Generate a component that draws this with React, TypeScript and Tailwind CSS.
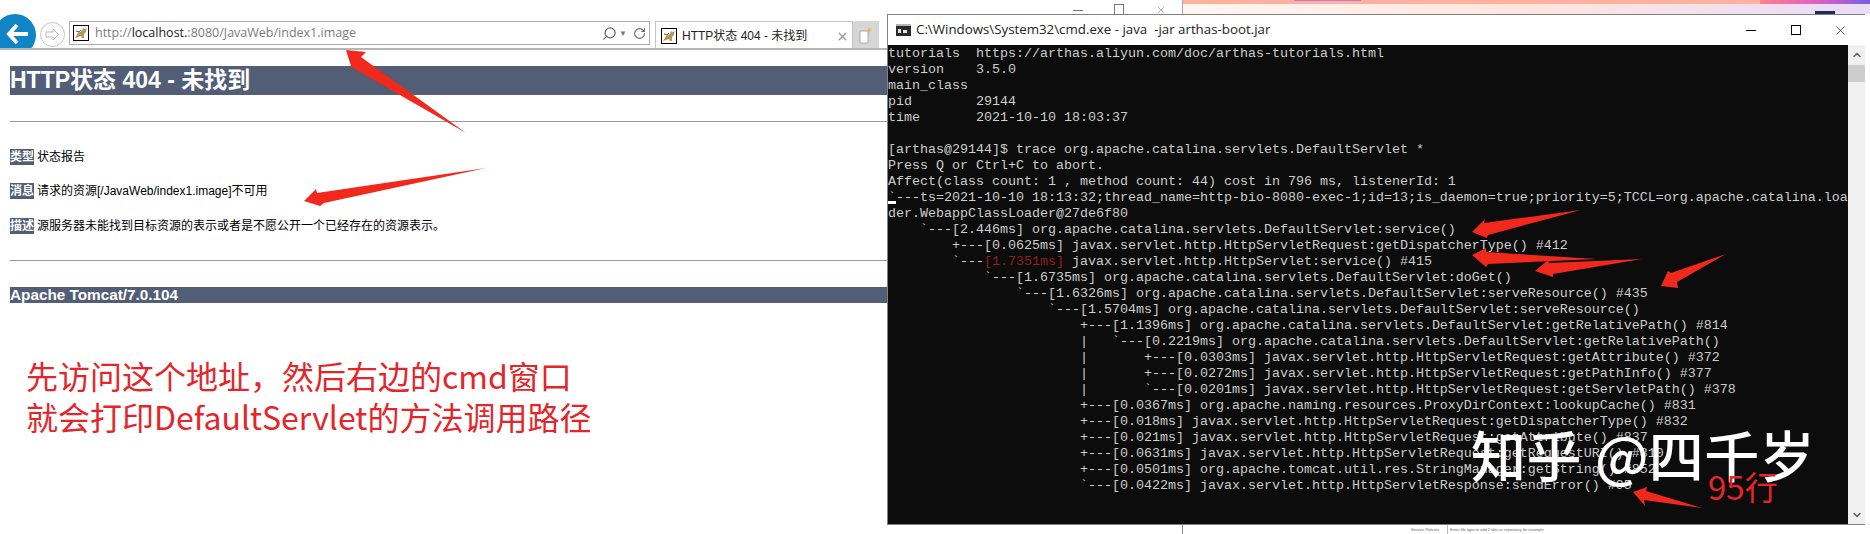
import { ChevronDown, ChevronUp, RotateCw, Search, X } from "lucide-react";

const mono = "font-['Liberation_Mono',monospace]";
const cjk = "font-['Liberation_Sans','Noto_Sans_CJK_SC',sans-serif]";

const consoleLines = [
  "tutorials  https://arthas.aliyun.com/doc/arthas-tutorials.html",
  "version    3.5.0",
  "main_class",
  "pid        29144",
  "time       2021-10-10 18:03:37",
  "",
  "[arthas@29144]$ trace org.apache.catalina.servlets.DefaultServlet *",
  "Press Q or Ctrl+C to abort.",
  "Affect(class count: 1 , method count: 44) cost in 796 ms, listenerId: 1",
  "`---ts=2021-10-10 18:13:32;thread_name=http-bio-8080-exec-1;id=13;is_daemon=true;priority=5;TCCL=org.apache.catalina.loa",
  "der.WebappClassLoader@27de6f80",
  "    `---[2.446ms] org.apache.catalina.servlets.DefaultServlet:service()",
  "        +---[0.0625ms] javax.servlet.http.HttpServletRequest:getDispatcherType() #412",
  "        `---[1.7351ms] javax.servlet.http.HttpServlet:service() #415",
  "            `---[1.6735ms] org.apache.catalina.servlets.DefaultServlet:doGet()",
  "                `---[1.6326ms] org.apache.catalina.servlets.DefaultServlet:serveResource() #435",
  "                    `---[1.5704ms] org.apache.catalina.servlets.DefaultServlet:serveResource()",
  "                        +---[1.1396ms] org.apache.catalina.servlets.DefaultServlet:getRelativePath() #814",
  "                        |   `---[0.2219ms] org.apache.catalina.servlets.DefaultServlet:getRelativePath()",
  "                        |       +---[0.0303ms] javax.servlet.http.HttpServletRequest:getAttribute() #372",
  "                        |       +---[0.0272ms] javax.servlet.http.HttpServletRequest:getPathInfo() #377",
  "                        |       `---[0.0201ms] javax.servlet.http.HttpServletRequest:getServletPath() #378",
  "                        +---[0.0367ms] org.apache.naming.resources.ProxyDirContext:lookupCache() #831",
  "                        +---[0.018ms] javax.servlet.http.HttpServletRequest:getDispatcherType() #832",
  "                        +---[0.021ms] javax.servlet.http.HttpServletRequest:getAttribute() #837",
  "                        +---[0.0631ms] javax.servlet.http.HttpServletRequest:getRequestURI() #810",
  "                        +---[0.0501ms] org.apache.tomcat.util.res.StringManager:getString() #852",
  "                        `---[0.0422ms] javax.servlet.http.HttpServletResponse:sendError() #95",
];

const arrows = [
  "346,50 366,52 361,57 466,133 353,68 351,66",
  "304,201 316,189 317,193 486,168 324,203 320,206",
  "1472,232 1485,219 1484,223 1581,210 1488,235 1487,238",
  "1472,255 1486,248 1486,252 1597,259 1488,264 1486,267",
  "1535,271 1548,260 1549,263 1642,259 1553,274 1553,277",
  "1661,286 1668,271 1671,273 1726,254 1677,282 1678,288",
  "1633,492 1647,487 1646,491 1702,508 1644,500 1645,506",
];

function TomcatIcon() {
  return (
    <svg width="16" height="16" viewBox="0 0 16 16" className="shrink-0">
      <rect x="0.5" y="0.5" width="15" height="15" fill="#fff" stroke="#000" />
      <path d="M2 13l3-5 4-2 1-3 1.5 1 2-1-.5 4-2 2v4h-2l-1-2-3 1z" fill="#b8955a" />
      <path d="M3 6l3 1 2-2" fill="none" stroke="#6b5a3a" />
    </svg>
  );
}

function Toolbar() {
  return (
    <div className="flex h-[50px] items-start overflow-hidden border-b-2 border-[#b5b5b5]">
      <div className="-ml-[6px] mt-[14px] flex h-[42px] w-[42px] shrink-0 items-center justify-center rounded-full bg-[#0f84c6]">
        <svg width="24" height="22" viewBox="0 0 24 22" className="ml-[6px] -mt-[2px]">
          <path d="M11 2L3 11l8 9M4 11h18" fill="none" stroke="#fff" strokeWidth="4" />
        </svg>
      </div>
      <div className="ml-1 mt-[22px] flex h-[25px] w-[25px] shrink-0 items-center justify-center rounded-full border border-[#c4c4c4]">
        <svg width="15" height="13" viewBox="0 0 15 13">
          <path d="M8 1l5.500 5.500L8 12V9H1V4h7z" fill="#fff" stroke="#b8b8b8" />
        </svg>
      </div>
      <div className="ml-1 mt-[21px] flex h-6 w-[581px] shrink-0 items-center gap-[6px] border border-[#adadad] pl-[3px] font-['Open_Sans',sans-serif] text-[12.500px] text-[#7b7b7b]">
        <TomcatIcon />
        <span>
          http://<span className="text-[#222]">localhost.</span>:8080/JavaWeb/index1.image
        </span>
        <Search size={15} className="ml-auto -scale-x-100 text-[#666]" />
        <span className="-ml-1 text-[8px] text-[#777]">▼</span>
        <RotateCw size={13} className="mr-[3px] text-[#666]" />
      </div>
      <div className={`ml-[5px] mt-[21px] flex h-[29px] w-[198px] shrink-0 items-center gap-[5px] border border-b-0 border-[#c4c4c4] pl-[5px] text-[12px] text-[#222] ${cjk}`}>
        <TomcatIcon />
        <span>HTTP状态 404 - 未找到</span>
        <X size={13} className="ml-auto mr-[3px] text-[#999]" strokeWidth={2.5} />
      </div>
      <div className="mt-[21px] flex h-[28px] w-[26px] shrink-0 items-center justify-center bg-[#d6d6d6]">
        <svg width="14" height="18" viewBox="0 0 14 18">
          <path d="M1 5h8v12H1z" fill="#fff" stroke="#aaa" />
          <path d="M10 1l1 2.500L13.500 4 11 5l-1 2.500L9 5 6.500 4 9 3.500z" fill="#f4b43c" />
        </svg>
      </div>
    </div>
  );
}

function InfoRow({ label, text }: { label: string; text: string }) {
  return (
    <div className="flex h-4 items-center gap-[3px] text-[12px] leading-4 text-black">
      <span className="bg-[#525d76] font-bold text-white">{label}</span>
      <span>{text}</span>
    </div>
  );
}

function BrowserPane() {
  return (
    <div className={`w-[887px] shrink-0 bg-white ${cjk}`}>
      <Toolbar />
      <div className="pl-[10px]">
        <h1 className="mt-4 h-[29px] bg-[#525d76] text-[23px] font-bold leading-[29px] text-white">
          HTTP状态 404 - 未找到
        </h1>
        <div className="mt-[26px] h-px bg-[#999]" />
        <div className="mt-[27px] flex flex-col gap-[18px]">
          <InfoRow label="类型" text="状态报告" />
          <InfoRow label="消息" text="请求的资源[/JavaWeb/index1.image]不可用" />
          <div className="mt-px">
            <InfoRow label="描述" text="源服务器未能找到目标资源的表示或者是不愿公开一个已经存在的资源表示。" />
          </div>
        </div>
        <div className="mt-[26px] h-px bg-[#999]" />
        <div className="mt-[26px] h-4 bg-[#525d76] text-[15.300px] font-bold leading-4 text-white">
          Apache Tomcat/7.0.104
        </div>
        <div className="mt-[52px] pl-4 font-['Noto_Sans_CJK_SC',sans-serif] text-[32px] leading-[41px] text-[#e4262a]">
          <p>先访问这个地址，然后右边的cmd窗口</p>
          <p>就会打印DefaultServlet的方法调用路径</p>
        </div>
      </div>
    </div>
  );
}

function BackdropTop() {
  return (
    <div className="flex h-[14px] overflow-hidden">
      <div className="flex w-[296px] shrink-0 items-start justify-end gap-[31px] border-r border-[#aaa] bg-white pr-[16px] pt-1 text-[#777]">
        <div className="mt-[6px] h-px w-[10px] bg-[#777]" />
        <div className="h-[12px] w-[10px] border border-[#777]" />
        <X size={12} strokeWidth={1} className="-mr-px" />
      </div>
      <div className="flex flex-1 flex-col">
        <div className="flex h-1 bg-[#ffb19f]">
          <div className="ml-[111px] h-px w-[67px] bg-[#c47ad0]" />
          <div className="ml-auto h-full w-[110px] bg-gradient-to-r from-[#ff7f90] via-[#e060c0] to-[#7a5be0]" />
        </div>
        <div className="flex flex-1 bg-gradient-to-r from-[#fff6f2] via-[#ffe6de] to-[#eadcf8]">
          <div className="ml-[632px] mt-[7px] h-[3px] w-5 bg-[#1c2c5c]" />
        </div>
      </div>
    </div>
  );
}

function BackdropBottom() {
  return (
    <div className="flex h-[9px] overflow-hidden bg-white pl-[295px] font-['Liberation_Sans',sans-serif] text-[4px] leading-[9px] text-[#666]">
      <div className="mr-[228px] h-full w-px bg-[#888]" />
      <span className="w-[32px]">Service Policies</span>
      <span className="ml-1 border-l border-[#bbb] pl-[2px]">Enter file type to add 2 tiles or repository for example</span>
    </div>
  );
}

function CmdWindow() {
  return (
    <div className="flex h-[511px] w-[978px] flex-col border-b border-l border-t border-[#808080] bg-white">
      <div className="flex h-[30px] shrink-0 items-center pl-2 pr-[19px]">
        <svg width="15" height="12" viewBox="0 0 15 12" className="shrink-0">
          <rect width="15" height="12" fill="#2a2a2a" />
          <rect width="15" height="2" fill="#b5b5b5" />
          <rect x="2" y="5" width="3" height="4" fill="#e5e5e5" />
          <rect x="7" y="6" width="4" height="3" fill="#e5e5e5" />
        </svg>
        <span className="ml-[5px] whitespace-pre font-['Open_Sans',sans-serif] text-[13.300px] text-[#222]">
          {"C:\\Windows\\System32\\cmd.exe - java  -jar arthas-boot.jar"}
        </span>
        <div className="ml-auto h-px w-[10px] bg-black" />
        <div className="ml-[35px] h-[10px] w-[10px] border border-black" />
        <X size={15} strokeWidth={1} className="ml-[32px] -mr-[2px] text-black" />
      </div>
      <div className="flex min-h-0 flex-1">
        <div className={`w-[960px] shrink-0 overflow-hidden bg-[#0c0c0c] pt-px text-[13.33px] leading-4 text-[#cccccc] ${mono}`}>
          {consoleLines.map((line, i) => {
            if (line.includes("1.7351ms")) {
              const [before, after] = line.split("[1.7351ms]");
              return (
                <div key={i} className="h-4 whitespace-pre">
                  {before}
                  <span className="text-[#8f1f1f]">[1.7351ms]</span>
                  {after}
                </div>
              );
            }
            return (
              <div key={i} className="relative h-4 whitespace-pre">
                {line}
                {line.startsWith("`---ts") && (
                  <div className="absolute left-0 top-[11px] h-[3px] w-2 bg-white" />
                )}
              </div>
            );
          })}
        </div>
        <div className="flex flex-1 flex-col items-center bg-[#f0f0f0] pt-[4px] pb-[3px] text-[#606060]">
          <ChevronUp size={12} strokeWidth={3} />
          <div className="mt-[4px] h-[17px] w-full bg-[#cdcdcd]" />
          <ChevronDown size={12} strokeWidth={3} className="mt-auto" />
        </div>
      </div>
    </div>
  );
}

export default function App() {
  return (
    <div className="relative flex h-[534px] w-[1870px] overflow-hidden bg-white">
      <BrowserPane />
      <div className="flex w-[983px] flex-col">
        <BackdropTop />
        <CmdWindow />
        <BackdropBottom />
      </div>

      <svg className="pointer-events-none absolute left-0 top-0" width="1870" height="534" viewBox="0 0 1870 534">
        {arrows.map((points) => (
          <polygon key={points} points={points} fill="#f1281c" />
        ))}
      </svg>
      <div className="absolute left-[1471px] top-[413px] whitespace-pre font-['Noto_Sans_CJK_SC',sans-serif] text-[55px] font-medium leading-[80px] tracking-[0.5px] text-white">
        知乎 @四千岁
      </div>
      <div className="absolute left-[1708px] top-[465px] font-['Noto_Sans_CJK_SC',sans-serif] text-[33px] leading-[42px] text-[#e5262a]">
        95行
      </div>
    </div>
  );
}
